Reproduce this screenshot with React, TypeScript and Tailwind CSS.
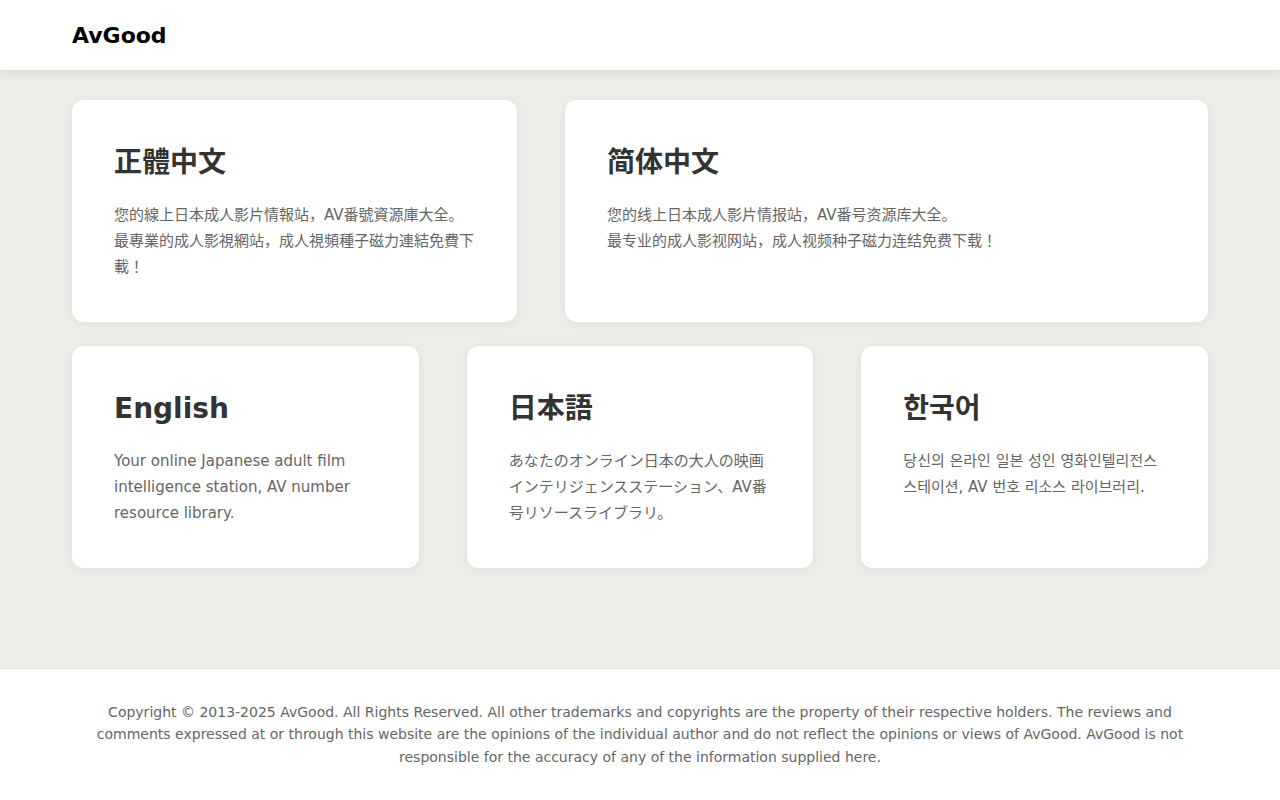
const langs = [
  {
    title: '正體中文',
    desc: '您的線上日本成人影片情報站，AV番號資源庫大全。\n最專業的成人影視網站，成人視頻種子磁力連結免費下載！',
  },
  {
    title: '简体中文',
    desc: '您的线上日本成人影片情报站，AV番号资源库大全。\n最专业的成人影视网站，成人视频种子磁力连结免费下载！',
  },
  {
    title: 'English',
    desc: 'Your online Japanese adult film intelligence station, AV number resource library.',
  },
  {
    title: '日本語',
    desc: 'あなたのオンライン日本の大人の映画インテリジェンスステーション、AV番号リソースライブラリ。',
  },
  {
    title: '한국어',
    desc: '당신의 온라인 일본 성인 영화인텔리전스 스테이션, AV 번호 리소스 라이브러리.',
  },
]

function LangCard({ title, desc }: { title: string; desc: string }) {
  return (
    <a
      href="#"
      className="block bg-white rounded-xl p-[42px] shadow-[0_2px_8px_rgba(0,0,0,0.06)]"
    >
      <h2 className="text-[28px] leading-[42px] font-bold text-[#333] mb-[18px]">{title}</h2>
      <p className="text-[15px] leading-[26px] text-[#666] whitespace-pre-line">{desc}</p>
    </a>
  )
}

export default function App() {
  return (
    <div className="min-h-screen flex flex-col bg-[#ecece8] font-['DejaVu_Sans','Noto_Sans_CJK_JP',sans-serif]">
      {/* Header */}
      <header className="h-[70px] bg-white shadow-[0_2px_10px_rgba(0,0,0,0.1)] relative z-10">
        <div className="h-full px-[72px] flex items-center">
          <span className="text-[22px] font-bold text-black">AvGood</span>
        </div>
      </header>

      {/* Language cards */}
      <main className="flex-1 px-[72px] py-[30px]">
        <div className="grid grid-cols-[445fr_643fr] gap-x-12 mb-6">
          <LangCard {...langs[0]} />
          <LangCard {...langs[1]} />
        </div>
        <div className="grid grid-cols-3 gap-x-12">
          <LangCard {...langs[2]} />
          <LangCard {...langs[3]} />
          <LangCard {...langs[4]} />
        </div>
      </main>

      {/* Footer */}
      <footer className="bg-white border-t border-[#e4e4e0] px-[72px] py-8">
        <p className="text-sm leading-[22.5px] text-[#666] text-center">
          Copyright © 2013-2025 AvGood. All Rights Reserved. All other trademarks and copyrights are the
          property of their respective holders. The reviews and comments expressed at or through this website
          are the opinions of the individual author and do not reflect the opinions or views of AvGood. AvGood
          is not responsible for the accuracy of any of the information supplied here.
        </p>
      </footer>
    </div>
  )
}
